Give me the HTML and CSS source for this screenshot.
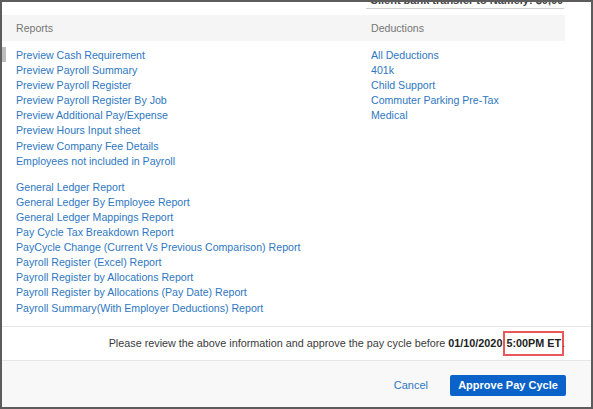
FILE: index.html
```html
<!DOCTYPE html>
<html>
<head>
<meta charset="utf-8">
<link rel="stylesheet" href="styles.css">
</head>
<body>
<div class="frame">
  <div class="topline">
    <div class="topline-clip"><span class="topline-text">Client bank transfer to Namely: $0,000.00</span></div>
  </div>
  <div class="head">
    <div class="col-left">Reports</div>
    <div class="col-right">Deductions</div>
  </div>
  <div class="body">
    <span class="scrollmark"></span>
    <div class="col-left">
      <ul class="links">
        <li><a>Preview Cash Requirement</a></li>
        <li><a>Preview Payroll Summary</a></li>
        <li><a>Preview Payroll Register</a></li>
        <li><a>Preview Payroll Register By Job</a></li>
        <li><a>Preview Additional Pay/Expense</a></li>
        <li><a>Preview Hours Input sheet</a></li>
        <li><a>Preview Company Fee Details</a></li>
        <li><a>Employees not included in Payroll</a></li>
      </ul>
      <ul class="links group2">
        <li><a>General Ledger Report</a></li>
        <li><a>General Ledger By Employee Report</a></li>
        <li><a>General Ledger Mappings Report</a></li>
        <li><a>Pay Cycle Tax Breakdown Report</a></li>
        <li><a>PayCycle Change (Current Vs Previous Comparison) Report</a></li>
        <li><a>Payroll Register (Excel) Report</a></li>
        <li><a>Payroll Register by Allocations Report</a></li>
        <li><a>Payroll Register by Allocations (Pay Date) Report</a></li>
        <li><a>Payroll Summary(With Employer Deductions) Report</a></li>
      </ul>
    </div>
    <div class="col-right">
      <ul class="links">
        <li><a>All Deductions</a></li>
        <li><a>401k</a></li>
        <li><a>Child Support</a></li>
        <li><a>Commuter Parking Pre-Tax</a></li>
        <li><a>Medical</a></li>
      </ul>
    </div>
  </div>
  <div class="notice">
    <p class="notice-text">Please review the above information and approve the pay cycle before <b>01/10/2020</b> <b class="hl">5:00PM ET</b>.</p>
  </div>
  <div class="footer">
    <a class="cancel">Cancel</a>
    <button class="approve">Approve Pay Cycle</button>
  </div>
</div>
</body>
</html>
```
FILE: styles.css
```css
html, body {
  margin: 0;
  padding: 0;
  background: #ffffff;
}
body {
  font-family: "Liberation Sans", Arial, sans-serif;
  font-size: 10.6px;
  color: #333333;
}
.frame {
  width: 593px;
  height: 409px;
  box-sizing: border-box;
  border: 2px solid #5c5c5c;
  display: flex;
  flex-direction: column;
  overflow: hidden;
}
.topline {
  height: 13px;
  display: flex;
  justify-content: flex-end;
  padding-right: 27px;
}
.topline-clip {
  width: 198px;
  height: 5px;
  overflow: hidden;
  border-bottom: 1px solid #d0d0d0;
  padding-bottom: 1px;
}
.topline-text {
  display: block;
  margin-top: -8px;
  padding-left: 4px;
  font-size: 11px;
  font-weight: bold;
  color: #444;
  white-space: nowrap;
  line-height: 13px;
}
.head {
  display: grid;
  grid-template-columns: 355px 1fr;
  height: 26px;
  align-items: center;
  background: #f5f5f5;
  margin-right: 26px;
  padding-left: 14px;
  color: #757575;
}
.body {
  display: grid;
  grid-template-columns: 355px 1fr;
  padding-left: 14px;
  padding-top: 7px;
  position: relative;
  flex: 1;
}
.scrollmark {
  position: absolute;
  left: 0;
  top: 6px;
  width: 4px;
  height: 15px;
  background: #bdbdbd;
}
.links {
  list-style: none;
  margin: 0;
  padding: 0;
}
.links li {
  height: 15.1px;
  line-height: 15px;
  white-space: nowrap;
}
.links a {
  color: #2e77c2;
  cursor: pointer;
}
.group2 {
  margin-top: 11px;
}
.notice {
  height: 35px;
  border-top: 1px solid #e6e6e6;
  border-bottom: 1px solid #e6e6e6;
  display: flex;
  align-items: center;
  justify-content: flex-end;
  padding-right: 26px;
  padding-bottom: 2px;
  box-sizing: border-box;
  color: #3a3a3a;
  font-size: 10.8px;
}
.notice-text {
  margin: 0;
  white-space: nowrap;
}
.notice b {
  color: #222;
}
.hl {
  display: inline-block;
  padding: 4px 1px 5px 1px;
  margin: -5px 0;
  outline: 2px solid #e8575a;
  outline-offset: 0;
}
.footer {
  height: 44px;
  background: #f8f8f8;
  display: flex;
  align-items: center;
  justify-content: flex-end;
  padding-right: 25px;
  gap: 22px;
  padding-top: 2px;
}
.cancel {
  color: #2e77c2;
  font-size: 11px;
}
.approve {
  background: #0b63c9;
  color: #fff;
  border: none;
  border-radius: 2px;
  height: 21px;
  width: 116px;
  font-family: "Liberation Sans", Arial, sans-serif;
  font-size: 11px;
  font-weight: bold;
  padding: 0;
}
```
